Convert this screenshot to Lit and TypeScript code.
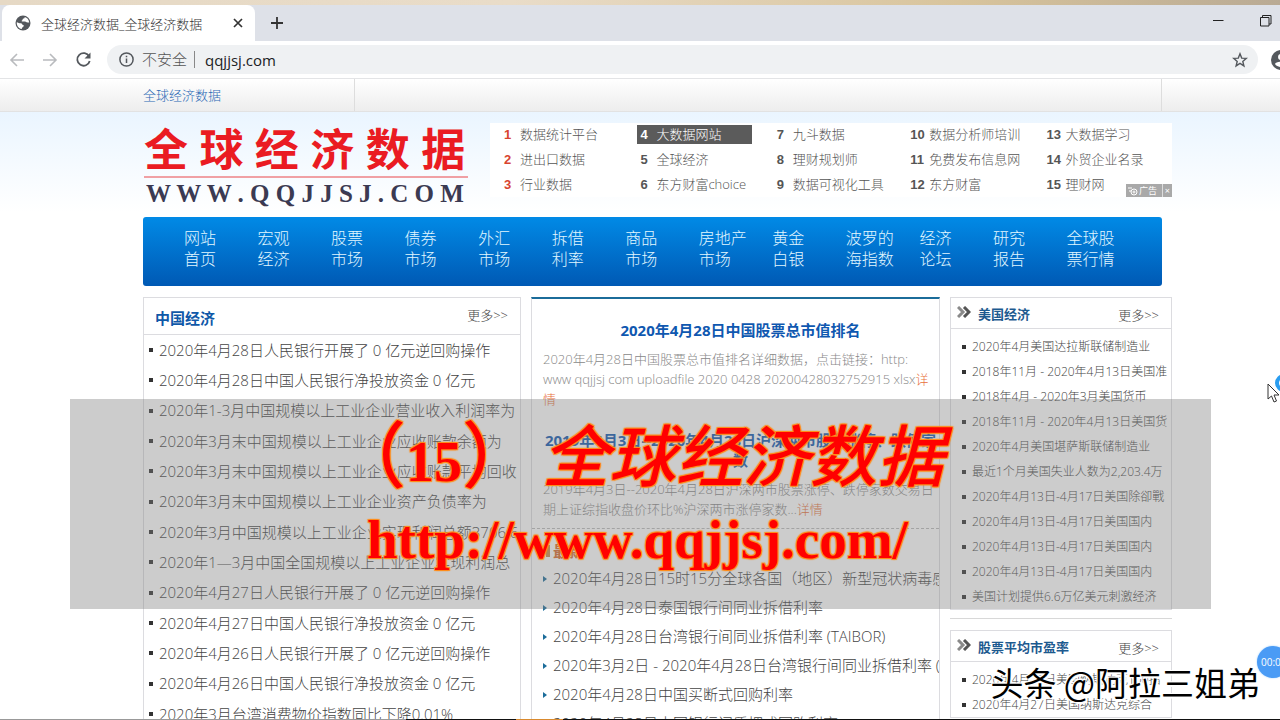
import { LitElement, html, css, svg } from "lit";
import { customElement } from "lit/decorators.js";

const NAV: [string, string][] = [
  ["网站", "首页"], ["宏观", "经济"], ["股票", "市场"], ["债券", "市场"], ["外汇", "市场"],
  ["拆借", "利率"], ["商品", "市场"], ["房地产", "市场"], ["黄金", "白银"], ["波罗的", "海指数"],
  ["经济", "论坛"], ["研究", "报告"], ["全球股", "票行情"],
];

const ADS = [
  "数据统计平台", "进出口数据", "行业数据", "大数据网站", "全球经济", "东方财富choice",
  "九斗数据", "理财规划师", "数据可视化工具", "数据分析师培训", "免费发布信息网", "东方财富",
  "大数据学习", "外贸企业名录", "理财网",
];

const CHINA = [
  "2020年4月28日人民银行开展了 0 亿元逆回购操作",
  "2020年4月28日中国人民银行净投放资金 0 亿元",
  "2020年1-3月中国规模以上工业企业营业收入利润率为",
  "2020年3月末中国规模以上工业企业应收账款余额为",
  "2020年3月末中国规模以上工业企业应收账款平均回收",
  "2020年3月末中国规模以上工业企业资产负债率为",
  "2020年3月中国规模以上工业企业实现利润总额3706.6",
  "2020年1—3月中国全国规模以上工业企业实现利润总",
  "2020年4月27日人民银行开展了 0 亿元逆回购操作",
  "2020年4月27日中国人民银行净投放资金 0 亿元",
  "2020年4月26日人民银行开展了 0 亿元逆回购操作",
  "2020年4月26日中国人民银行净投放资金 0 亿元",
  "2020年3月台湾消费物价指数同比下降0.01%",
];

const LATEST = [
  "2020年4月28日15时15分全球各国（地区）新型冠状病毒感染",
  "2020年4月28日泰国银行间同业拆借利率",
  "2020年4月28日台湾银行间同业拆借利率 (TAIBOR)",
  "2020年3月2日 - 2020年4月28日台湾银行间同业拆借利率 (TAIBOR)",
  "2020年4月28日中国买断式回购利率",
  "2020年4月28日中国银行间质押式回购利率",
];

const USA = [
  "2020年4月美国达拉斯联储制造业",
  "2018年11月 - 2020年4月13日美国准",
  "2018年4月 - 2020年3月美国货币",
  "2018年11月 - 2020年4月13日美国货",
  "2020年4月美国堪萨斯联储制造业",
  "最近1个月美国失业人数为2,203.4万",
  "2020年4月13日-4月17日美国除卻戰",
  "2020年4月13日-4月17日美国国内",
  "2020年4月13日-4月17日美国国内",
  "2020年4月13日-4月17日美国国内",
  "美国计划提供6.6万亿美元刺激经济",
];

const PE = ["2020年4月27日美国纳斯达克100指", "2020年4月27日美国纳斯达克综合"];

const chevrons = svg`<svg class="chev" viewBox="0 0 14 12" width="14" height="12" fill="none" stroke-width="3"><path d="M1 1l5 5-5 5" stroke="#8a8a8a"/><path d="M7 1l5 5-5 5" stroke="#555"/></svg>`;

@customElement("app-root")
export class AppRoot extends LitElement {
  static styles = css`
    :host {
      display: block; position: relative; height: 100vh; overflow: hidden; background: #fff;
      font-family: "Open Sans", "Noto Sans CJK SC", sans-serif; font-weight: 300; font-size: 13px; color: #444;
    }
    * { box-sizing: border-box; }
    a { color: inherit; text-decoration: none; }
    ul, ol, p, h1, h2, h3 { margin: 0; padding: 0; list-style: none; }
    button { border: 0; background: none; padding: 0; display: flex; align-items: center; justify-content: center; color: inherit; }
    .desk { height: 5px; background: linear-gradient(90deg, #e6d9c5, #e9dcc8 40%, #d8c49c 75%, #b9aa94); }
    .tabs { height: 36px; background: #dee1e8; display: flex; padding-left: 2px; align-items: center; }
    .tab {
      height: 36px; width: 253px; background: #fff; border-radius: 8px 8px 0 0; display: flex;
      align-items: center; padding: 0 10px 0 13px; gap: 10px;
    }
    .tab span { flex: 1; color: #333; }
    .plus { width: 44px; }
    .wins { margin-left: auto; display: flex; gap: 36px; padding: 0 8px 0 0; }
    .bar { height: 38px; border-bottom: 1px solid #e3e4e6; display: flex; align-items: center; padding-left: 8px; overflow: hidden; }
    .bar .nv { width: 18px; margin-right: 15px; flex: none; }
    .omni { flex: 1; height: 29px; border-radius: 15px; background: #eff1f3; display: flex; align-items: center; padding: 0 10px 0 12px; }
    .secure { font-size: 15px; margin-left: 8px; padding-right: 7px; border-right: 1px solid #888; line-height: 17px; color: #555; }
    .omni input {
      flex: 1; border: 0; background: none; outline: 0; padding: 0; margin-left: 10px; color: #202124;
      font: 400 15px "Open Sans", sans-serif;
    }
    .bar .me { width: 9px; margin-left: 13px; flex: none; justify-content: flex-start; }
    .me svg { flex: none; }
    .wrap { padding: 0 108px 0 143px; }
    .top { height: 33px; background: linear-gradient(#fff, #ededed); border-bottom: 1px solid #e2e2e2; padding-right: 118px; }
    .topin { height: 32px; display: flex; justify-content: space-between; border-right: 1px solid #ddd; }
    .topin a { width: 212px; border-right: 1px solid #ddd; line-height: 32px; color: #2b69b5; }
    .page { background: linear-gradient(#eaf5ff, #fff 100px); }
    .head { display: flex; padding: 11px 0 7px; }
    .logo { width: 347px; padding-left: 1px; }
    .logo .cn {
      font-size: 44px; line-height: 53px; font-weight: 700; color: #ea1b22; white-space: nowrap;
      border-bottom: 2px solid #f0a0a4; width: 324px;
    }
    .logo .en { font: 700 25px/32px "Liberation Serif", serif; color: #3b3a52; white-space: nowrap; padding-left: 2px; }
    .ad {
      flex: 1; height: 74px; background: #fff; position: relative; display: grid;
      grid-template-rows: repeat(3, 25px); grid-auto-columns: 1fr; grid-auto-flow: column;
    }
    .ad li { padding: 2px 0 0 11px; }
    .ad a { display: flex; line-height: 19px; height: 19px; width: 115px; color: #555; white-space: nowrap; }
    .ad b { font: 700 13px/19px "Liberation Sans", sans-serif; width: 19px; padding-left: 3px; }
    .ad li:nth-child(n + 10) b { width: 22px; }
    .ad li:nth-child(n + 10) { padding-left: 8px; }
    .ad a.hot b { color: #d8442f; }
    .ad a.sel { background: #5b5b5b; color: #fff; }
    .adtag {
      position: absolute; right: 0; bottom: 0; width: 46px; height: 13px; background: #a9a9a9; color: #fff;
      display: flex; align-items: center; font-size: 9px; padding: 0 2px; gap: 1px; line-height: 13px; font-weight: 400; white-space: nowrap;
    }
    .adtag svg { flex: none; }
    .adtag i { font-style: normal; border-left: 1px solid #ddd; padding-left: 2px; margin-left: auto; }
    .nav {
      margin-right: 10px; height: 69px; border-radius: 3px; background: linear-gradient(#018ae6, #0059b4);
      display: grid; grid-template-columns: repeat(13, minmax(0, 1fr)); padding: 11px 22px 0 41px;
    }
    .nav a { font-size: 16px; line-height: 21px; color: #e2f7ff; white-space: nowrap; }
    .cols { display: grid; grid-template-columns: 378fr 409fr 222fr; gap: 10px; padding-top: 11px; }
    .cols > * { min-width: 0; }
    .box { border: 1px solid #dcdce0; }
    .bh { display: flex; border-bottom: 1px solid #dcdce0; }
    .bh a { margin-left: auto; padding-right: 12px; line-height: 35px; }
    .bh h2 { font-size: 15px; line-height: 41px; color: #0f58a8; font-weight: 700; padding-left: 11px; }
    .left .bh { height: 37px; }
    li { white-space: nowrap; }
    .list li { display: flex; align-items: center; gap: 6px; }
    .list li::before { content: ""; width: 4px; height: 4px; background: #333; flex: none; }
    .left .list li { font-size: 15px; line-height: 30px; padding-left: 5px; }
    .left .list li:nth-child(3n) { line-height: 31px; }
    .mid { border: 1px solid #dcdce0; border-top: 2px solid #1b6c9a; overflow: hidden; }
    .story { padding: 0 1px 0 11px; }
    .story h3 { text-align: center; font-size: 15px; line-height: 20px; font-weight: 700; color: #0f58b0; padding: 21px 0 9px; white-space: nowrap; }
    .story p { line-height: 20px; color: #888; white-space: nowrap; }
    .story p a { color: #e8703a; }
    .latest { border-top: 1px dashed #bbb; margin-top: 9px; padding-top: 9px; }
    .latest h2 { font-size: 15px; line-height: 26px; color: #d9692a; font-weight: 700; padding-left: 14px; display: flex; align-items: center; gap: 3px; }
    .latest h2::before { content: ""; width: 4px; height: 12px; background: #c98a4a; }
    .latest li { font-size: 15px; line-height: 29px; display: flex; align-items: center; gap: 6px; padding-left: 11px; }
    .latest li::before { content: ""; border: 3px solid transparent; border-left: 4px solid #1b6c9a; border-right: 0; flex: none; }
    .right .bh { height: 31px; padding-left: 6px; }
    .right .bh h2 { font-size: 13px; line-height: 33px; padding-left: 7px; color: #1d5a8f; }
    .chev { margin-top: 8px; }
    .right .list { padding-top: 5px; }
    .right .list li { font-size: 12px; line-height: 25px; padding-left: 11px; }
    .right hr { border: 0; border-top: 1px solid #d8d8d8; margin: 8px 0 11px; }
    .band {
      position: absolute; left: 70px; right: 69px; top: 399px; height: 210px; background: rgba(128, 128, 128, 0.4);
      color: #f00; text-shadow: 0 0 1px #ff8c1a, 1px 1px 1px #ff8c1a, -1px -1px 1px #ff8c1a, 1px -1px 1px #ff8c1a, -1px 1px 1px #ff8c1a;
      white-space: nowrap; font-weight: 700; padding-top: 8px;
    }
    .band div { display: flex; align-items: baseline; padding-left: 264px; font-size: 67px; line-height: 92px; }
    .band .paren { font-size: 72px; font-weight: 500; }
    .band .num { font-family: "Liberation Serif", serif; font-size: 56px; }
    .band .name { font-style: italic; font-weight: 500; margin-left: 8px; }
    .band p { font: 700 55px/64px "Liberation Serif", serif; padding-left: 297px; }
    .mark {
      position: absolute; right: 20px; bottom: 16px; font: 400 33px/44px "Noto Sans CJK SC", sans-serif; color: #000;
      text-shadow: -1px -1px 0 #fff, 1px -1px 0 #fff, -1px 1px 0 #fff, 2px 2px 0 #fff; white-space: nowrap;
    }
    .timer {
      position: absolute; right: -9px; top: 646px; width: 32px; height: 32px; border-radius: 50%; background: #4a9bf5;
      color: #fff; font: 400 10px/32px "Open Sans", sans-serif; padding-left: 4px; overflow: hidden; box-shadow: 0 0 2px #9cf;
    }
    .cursor { position: absolute; right: 0; top: 374px; }
    .task { position: absolute; left: 0; right: 0; bottom: 0; height: 1px; background: linear-gradient(90deg, #999 406px, #111 406px, #111 516px, #d98a2e 516px, #d98a2e 563px, #111 563px); }
  `;

  render() {
    return html`
      <div class="desk"></div>
      <div class="tabs">
        <div class="tab">
          <svg width="16" height="16" viewBox="0 0 16 16"><circle cx="8" cy="8" r="7.5" fill="#54585d"/><path d="M1.8 7.2C3 7.6 4.400 8.200 5.600 8.200c1.800 0 1.200 1.600 2.600 1.800 1 .2.6 1.800-.6 2.200-.8.400-.6 1.400-1 1.900C3.600 13.400 1.500 10.500 1.800 7.200zM9.600 2c.6 1.200-.8 1.400-1.600 1.800-.6.4 0 1.200-1 1.600-.8.4-.2 1.200.6 1.200 1.600 0 2.200-.6 3 .2.800.8 2.200.6 3.600.6C13.900 4.600 12 2.600 9.600 2z" fill="#fff"/></svg>
          <span>全球经济数据_全球经济数据</span>
          <button aria-label="关闭标签页"><svg width="14" height="14" viewBox="0 0 14 14" stroke="#333" stroke-width="1.700"><path d="M3 3l8 8M11 3l-8 8"/></svg></button>
        </div>
        <button class="plus" aria-label="新标签页"><svg width="14" height="14" viewBox="0 0 14 14" stroke="#333" stroke-width="1.800"><path d="M7 1v12M1 7h12"/></svg></button>
        <div class="wins">
          <button aria-label="最小化"><svg width="11" height="18" viewBox="0 0 11 18" stroke="#222"><path d="M0 6.500h10.500"/></svg></button>
          <button aria-label="还原"><svg width="12" height="18" viewBox="0 0 12 18" stroke="#222" fill="none"><path d="M.5 3.500h8.500v8.500h-8.500zM2.500 3.500v-2h8.500v8.500h-2"/></svg></button>
        </div>
      </div>
      <div class="bar">
        <button class="nv" aria-label="后退"><svg width="16" height="16" viewBox="0 0 16 16" stroke="#b9bbbe" stroke-width="1.600" fill="none"><path d="M15 8H2M8 2L2 8l6 6"/></svg></button>
        <button class="nv" aria-label="前进"><svg width="16" height="16" viewBox="0 0 16 16" stroke="#b9bbbe" stroke-width="1.600" fill="none"><path d="M1 8h13M8 2l6 6-6 6"/></svg></button>
        <button class="nv" aria-label="重新加载"><svg width="17" height="17" viewBox="0 0 17 17"><path d="M14.200 5.500A6.300 6.300 0 1 0 14.700 10" stroke="#54585d" stroke-width="1.800" fill="none"/><path d="M15.500 1.500v6h-6z" fill="#54585d"/></svg></button>
        <div class="omni">
          <svg width="15" height="15" viewBox="0 0 15 15" fill="none" stroke="#54585d" stroke-width="1.500"><circle cx="7.500" cy="7.500" r="6.600"/><path d="M7.500 6.500v4.500M7.500 3.800v1.500"/></svg>
          <label class="secure" for="url">不安全</label>
          <input id="url" value="qqjjsj.com" />
          <button aria-label="收藏"><svg width="16" height="16" viewBox="0 0 16 16" fill="none" stroke="#54585d" stroke-width="1.400"><path d="M8 1.800l1.700 4.300 4.600.3-3.500 3 1.100 4.500L8 11.400l-3.900 2.500 1.100-4.500-3.500-3 4.600-.3z"/></svg></button>
        </div>
        <button class="me" aria-label="用户"><svg width="20" height="20" viewBox="0 0 20 20"><circle cx="10" cy="10" r="10" fill="#54585d"/><circle cx="10" cy="7" r="3" fill="#fff"/><path d="M4 14c1-3 11-3 12 0-2.500 4-9.500 4-12 0z" fill="#fff"/></svg></button>
      </div>
      <div class="wrap top"><div class="topin"><a href="#">全球经济数据</a></div></div>
      <div class="wrap page">
        <header class="head">
          <h1 class="logo"><div class="cn">全 球 经 济 数 据</div><div class="en">W W W . Q Q J J S J . C O M</div></h1>
          <ol class="ad">
            ${ADS.map((t, i) => html`<li><a href="#" class=${i < 3 ? "hot" : i === 3 ? "sel" : ""}><b>${i + 1}</b>${t}</a></li>`)}
            <div class="adtag"><svg width="10" height="10" viewBox="0 0 10 10" fill="none" stroke="#fff"><circle cx="6" cy="6" r="3"/><circle cx="6" cy="6" r="1"/><path d="M0 2h4M1 5h2"/></svg>广告<i>×</i></div>
          </ol>
        </header>
        <nav class="nav">${NAV.map(([a, b]) => html`<a href="#">${a}<br />${b}</a>`)}</nav>
        <main class="cols">
          <section class="box left">
            <div class="bh"><h2>中国经济</h2><a href="#">更多&gt;&gt;</a></div>
            <ul class="list">${CHINA.map((t) => html`<li><a href="#">${t}</a></li>`)}</ul>
          </section>
          <section class="mid">
            <div class="story">
              <h3>2020年4月28日中国股票总市值排名</h3>
              <p>2020年4月28日中国股票总市值排名详细数据，点击链接：http:<br />www qqjjsj com uploadfile 2020 0428 20200428032752915 xlsx<a href="#">详<br />情</a></p>
            </div>
            <div class="story">
              <h3>2019年4月3日--2020年4月28日沪深两市股票涨停、跌停家<br />数</h3>
              <p>2019年4月3日--2020年4月28日沪深两市股票涨停、跌停家数交易日<br />期上证综指收盘价环比%沪深两市涨停家数...<a href="#">详情</a></p>
            </div>
            <div class="latest">
              <h2>最新</h2>
              <ul>${LATEST.map((t) => html`<li><a href="#">${t}</a></li>`)}</ul>
            </div>
          </section>
          <aside class="right">
            <section class="box">
              <div class="bh">${chevrons}<h2>美国经济</h2><a href="#">更多&gt;&gt;</a></div>
              <ul class="list">${USA.map((t) => html`<li><a href="#">${t}</a></li>`)}</ul>
            </section>
            <hr />
            <section class="box">
              <div class="bh">${chevrons}<h2>股票平均市盈率</h2><a href="#">更多&gt;&gt;</a></div>
              <ul class="list">${PE.map((t) => html`<li><a href="#">${t}</a></li>`)}</ul>
            </section>
          </aside>
        </main>
      </div>
      <div class="band">
        <div><span class="paren">（</span><span class="num">15</span><span class="paren">）</span><span class="name">全球经济数据</span></div>
        <p>http://www.qqjjsj.com/</p>
      </div>
      <svg class="cursor" width="13" height="30" viewBox="0 0 13 30"><circle cx="17" cy="9" r="7" fill="none" stroke="#2a9df0" stroke-width="4"/><path d="M1 10v15l3.500-3 2.500 6 2.500-1-2.500-6h5z" fill="#fff" stroke="#333"/></svg>
      <div class="timer">00:0</div>
      <div class="mark">头条 @阿拉三姐弟</div>
      <div class="task"></div>
    `;
  }
}
